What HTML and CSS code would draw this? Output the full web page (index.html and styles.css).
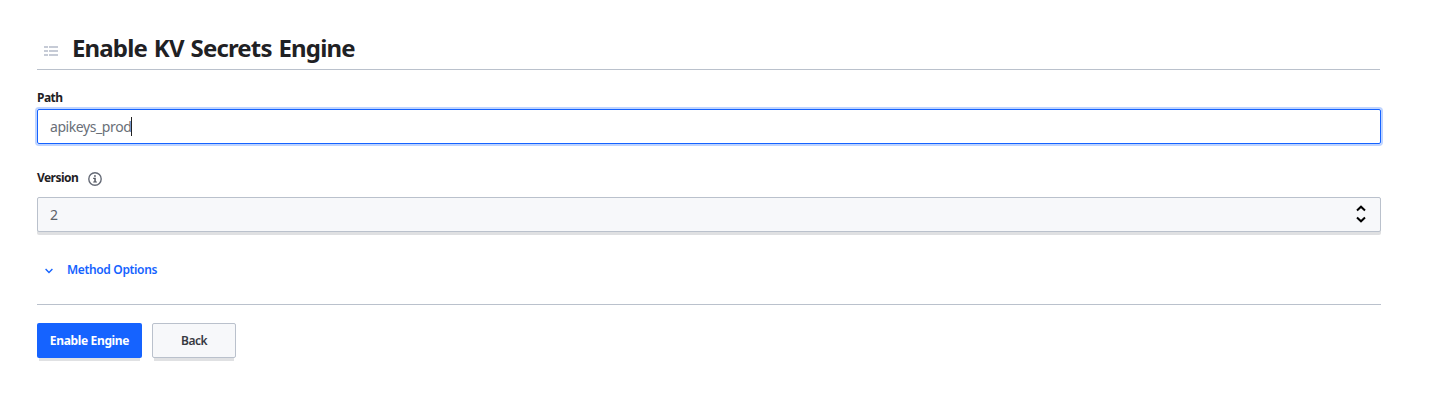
FILE: index.html
```html
<!DOCTYPE html>
<html lang="en">
<head>
<meta charset="utf-8">
<title>Enable KV Secrets Engine</title>
<link rel="stylesheet" href="styles.css">
</head>
<body>
<main class="page">
  <header class="header">
    <svg class="header-icon" width="14" height="12" viewBox="0 0 14 12"><path d="M0 2h4M5 2h9M0 6h4M5 6h9M0 10h4M5 10h9" stroke="#c6cbd6" stroke-width="1.8"/></svg>
    <h1 class="title">Enable KV Secrets Engine</h1>
  </header>
  <form class="form">
    <div class="label-row"><span class="label label-path">Path</span></div>
    <div class="input"><span class="input-text">apikeys_prod</span><span class="caret"></span></div>
    <div class="label-row version-row">
      <span class="label label-version">Version</span>
      <svg class="info" width="14" height="14" viewBox="0 0 14 14"><circle cx="7" cy="7" r="6.2" fill="none" stroke="#656a76" stroke-width="1.4"/><path d="M6.1 3.2h1.7v1.6H6.1zM5.2 5.8h2.6v3.6h1.1v1.2H5.2V9.4h1.1V7H5.2z" fill="#50545e"/></svg>
    </div>
    <div class="select"><span class="select-text">2</span>
      <svg class="arrows" width="10" height="18" viewBox="0 0 10 18"><path d="M1 5.5l4-3.8 4 3.8M1 12.5l4 3.8 4-3.8" fill="none" stroke="#000" stroke-width="2"/></svg>
    </div>
    <div class="options">
      <svg class="chevron" width="8" height="6" viewBox="0 0 8 6"><path d="M.6 1l3.4 3.4L7.4 1" fill="none" stroke="#1563ff" stroke-width="1.4"/></svg>
      <span class="options-text">Method Options</span>
    </div>
    <div class="actions">
      <div class="action"><div class="button primary"><span class="primary-text">Enable Engine</span></div></div>
      <div class="action"><div class="button secondary"><span class="back-text">Back</span></div></div>
    </div>
  </form>
</main>
</body>
</html>
```
FILE: styles.css
```css
* { box-sizing: border-box; }
body { margin: 0; background: #fff; color: #1f2124; font-family: "Noto Sans", "Open Sans", sans-serif; }
.page { width: 1381px; padding: 30px 0 0 37px; }
.header { display: flex; align-items: center; width: 1343px; height: 40px; padding-left: 7px; border-bottom: 1px solid #bac1cc; }
.header-icon { margin-top: 3px; }
.title { margin: 0 0 3px 13px; font-size: 24px; line-height: 36px; font-weight: 700; letter-spacing: -0.85px; word-spacing: 1.5px; white-space: nowrap; }
.form { padding-top: 18px; }
.label-row { display: flex; align-items: center; height: 21px; padding-bottom: 2px; }
.label { font-size: 12px; line-height: 18px; font-weight: 700; letter-spacing: -0.55px; }
.input { display: flex; align-items: center; height: 35px; padding-left: 12px; border: 1px solid #1563ff; border-radius: 2px; box-shadow: 0 0 0 2px #bfd4ff; font-size: 14px; color: #6a6f78; }
.input-text { letter-spacing: -0.42px; }
.caret { width: 1px; height: 19px; background: #222; }
.version-row { margin-top: 24px; height: 29px; padding-bottom: 9px; }
.info { margin: 2px 0 0 10px; }
.select { display: flex; align-items: center; justify-content: space-between; height: 35px; padding: 0 14px 0 12px; border: 1px solid #bac1cc; border-radius: 2px; background: #f7f8fa; box-shadow: 0 3px 0 #dfe0e2; font-size: 14px; color: #5d6269; }
.select-text { letter-spacing: -0.4px; }
.arrows { margin-top: -2px; }
.options { display: flex; align-items: center; gap: 14px; height: 73px; padding: 3px 0 0 8px; border-bottom: 1px solid #bac1cc; color: #1563ff; }
.chevron { margin-top: 3px; }
.options-text { font-size: 12px; font-weight: 600; letter-spacing: -0.35px; }
.actions { display: flex; gap: 10px; padding-top: 18px; }
.action::after { content: ""; display: block; height: 3px; margin: 0 2px; background: #e0e1e3; }
.button { display: flex; align-items: center; justify-content: center; height: 35px; border-radius: 2px; font-size: 12px; }
.primary { width: 105px; background: #1563ff; color: #fff; font-weight: 700; }
.secondary { width: 84px; border: 1px solid #bac1cc; background: #f7f8fa; color: #373a42; font-weight: 600; }
.primary-text { letter-spacing: -0.35px; }
.back-text { letter-spacing: -0.5px; }
.title::first-letter { margin-left: 1px; }
```
